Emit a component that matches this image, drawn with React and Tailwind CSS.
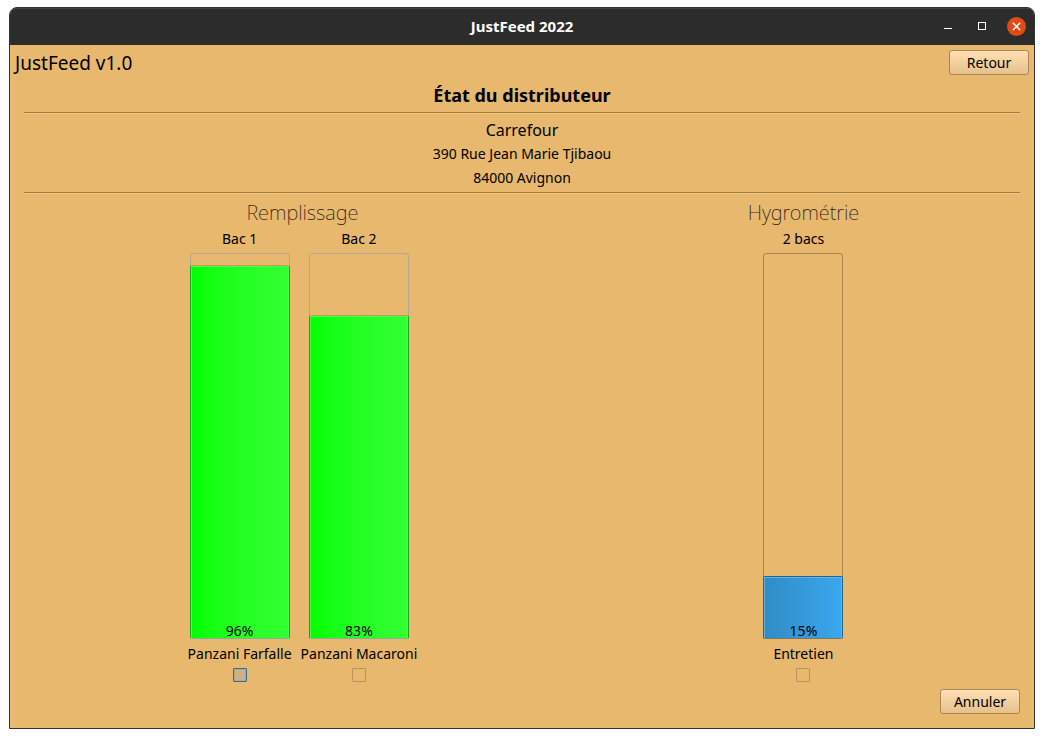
import React from 'react';

const tones = {
  green: {
    frame: 'w-[100px] border-[#b3a893]',
    fill: 'border-[#1ea41e] border-t-[#c59a5c] border-b-[#8fae9a] bg-linear-to-r from-[#00ff00] to-[#33ff33]',
    shine: 'border-[#48ff48]',
  },
  blue: {
    frame: 'w-20 border-[#a88450]',
    fill: 'border-[#23648f] border-b-[#7d7660] bg-linear-to-r from-[#308cc6] to-[#3aa7ee]',
    shine: 'border-[#5fb4ea]',
  },
};

function Gauge({ id, title, value, label, tone, active }) {
  const t = tones[tone];
  return (
    <div className="flex flex-col items-center">
      <span className="h-6 text-sm leading-5">{title}</span>
      <div
        role="progressbar"
        aria-label={`${title} ${label}`}
        aria-valuenow={value}
        aria-valuemin={0}
        aria-valuemax={100}
        className={`relative flex-1 rounded-[3px] border ${t.frame}`}
      >
        <div
          className={`absolute -inset-x-px -bottom-px rounded-[2px] border ${t.fill}`}
          style={{ height: `calc(${value}% + 5px)` }}
        >
          <div className={`h-full border border-b-0 ${t.shine}`} />
        </div>
        <span className="absolute inset-x-0 bottom-px text-center text-sm leading-3">{value}%</span>
      </div>
      <label htmlFor={id} className="mt-[3px] text-sm leading-6 whitespace-nowrap">
        {label}
      </label>
      <input
        id={id}
        type="checkbox"
        className={`mt-0.5 size-3.5 appearance-none rounded-[1px] border checked:bg-[#308cc6] ${
          active ? 'border-[#2a72a3] bg-[#d0b280] inset-ring inset-ring-[#b5a888]' : 'border-[#ba935a]'
        }`}
      />
    </div>
  );
}

function Group({ title, className, children }) {
  return (
    <section className={`flex flex-col items-center ${className}`}>
      <h2 className="h-7 text-xl leading-6 font-extralight text-[#2c2115]">{title}</h2>
      <div className="flex flex-1 gap-[9px]">{children}</div>
    </section>
  );
}

function Button({ children }) {
  return (
    <button
      type="button"
      className="h-[25px] w-20 rounded-[3px] border border-[#ac8750] bg-linear-to-b from-[#ffdfb2] to-[#e5c18c] text-sm leading-5 inset-shadow-[0_1px_#ffe5bd]"
    >
      {children}
    </button>
  );
}

function Rule() {
  return <hr className="h-0.5 border-t border-b border-t-[#9e7d4d] border-b-[#fac778]" />;
}

export default function App() {
  return (
    <div className="flex min-h-screen flex-col bg-white px-[9px] pt-[7px] pb-[9px] font-['Noto_Sans',sans-serif] text-black">
      <div className="flex flex-1 flex-col overflow-hidden rounded-t-lg border border-[#343434] bg-[#e7b86d]">
        <header className="grid h-[37px] grid-cols-[1fr_auto_1fr] items-center border-t border-[#414141] bg-[#2c2c2c] px-2 pb-0.5">
          <h1 className="col-start-2 text-[15px] leading-5 font-bold text-white">JustFeed 2022</h1>
          <div className="flex items-center justify-end gap-[21px] text-white">
            <button type="button" aria-label="Réduire" className="flex h-4 w-3.5 items-center justify-center">
              <svg viewBox="0 0 14 16" className="h-4 w-3.5" shapeRendering="crispEdges">
                <path d="M3 10h8v1H3z" fill="currentColor" />
              </svg>
            </button>
            <button type="button" aria-label="Agrandir" className="-ml-px flex h-4 w-3.5 items-center justify-center">
              <svg viewBox="0 0 14 16" className="h-4 w-3.5" shapeRendering="crispEdges">
                <path d="M3.5 4.5h7v7h-7z" fill="none" stroke="currentColor" />
              </svg>
            </button>
            <button type="button" aria-label="Fermer" className="-ml-[3px] size-[19px] rounded-full bg-[#e04a18]">
              <svg viewBox="0 0 19 19" className="size-[19px]">
                <path d="M5.8 5.8l7.4 7.4M13.2 5.8l-7.4 7.4" stroke="currentColor" strokeWidth="1.4" />
              </svg>
            </button>
          </div>
        </header>

        <div className="flex items-center justify-between px-[5px] pt-[5px]">
          <span className="text-[19px] leading-6">JustFeed v1.0</span>
          <Button>Retour</Button>
        </div>

        <main className="flex flex-1 flex-col px-3.5 pt-1.5 pb-3.5">
          <h2 className="pb-[3px] text-center text-lg leading-7 font-bold">État du distributeur</h2>
          <Rule />
          <address className="flex flex-col items-center pt-1 pb-0.5 text-sm leading-6 not-italic">
            <span className="text-base leading-6">Carrefour</span>
            <span>390 Rue Jean Marie Tjibaou</span>
            <span>84000 Avignon</span>
          </address>
          <Rule />
          <div className="flex flex-1 gap-1.5 pt-[7px]">
            <Group title="Remplissage" className="flex-[9]">
              <Gauge id="bac1" title="Bac 1" value={96} label="Panzani Farfalle" tone="green" active />
              <Gauge id="bac2" title="Bac 2" value={83} label="Panzani Macaroni" tone="green" />
            </Group>
            <Group title="Hygrométrie" className="flex-[7]">
              <Gauge id="entretien" title="2 bacs" value={15} label="Entretien" tone="blue" />
            </Group>
          </div>
          <div className="flex justify-end pt-[7px]">
            <Button>Annuler</Button>
          </div>
        </main>
      </div>
    </div>
  );
}
